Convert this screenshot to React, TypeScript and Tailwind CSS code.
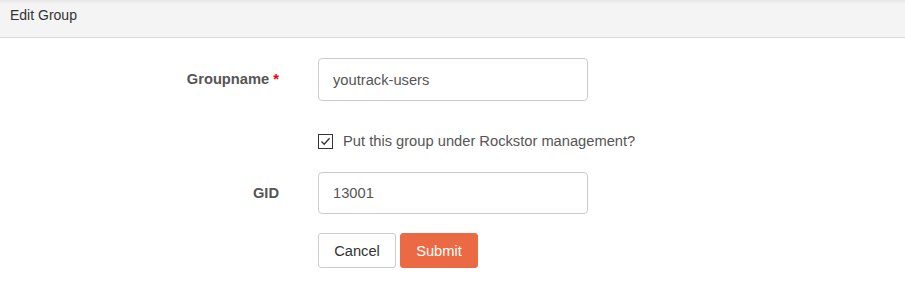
import { useState } from "react"

export default function App() {
  const [groupname, setGroupname] = useState("youtrack-users")
  const [gid, setGid] = useState("13001")
  const [managed, setManaged] = useState(true)

  return (
    <div className="min-h-[287px] bg-white text-[14px] text-[#555]" style={{ fontFamily: "'Liberation Sans', Arial, sans-serif" }}>
      <div className="h-[38px] border-b border-[#dcdcdc] bg-[#f4f4f4] bg-gradient-to-b from-[#e6e6e6] via-[#f4f4f4] via-[10%] to-[#f4f4f4] px-[10px] pt-[5px]">
        <span className="text-[14px] text-[#333]">Edit Group</span>
      </div>

      <form className="pt-[20px]" onSubmit={(e) => e.preventDefault()}>
        <div className="flex items-center">
          <label className="w-[280px] shrink-0 pr-[1px] text-right text-[14.7px] font-bold text-[#555]">
            Groupname <span className="text-[#e00]">*</span>
          </label>
          <input
            value={groupname}
            onChange={(e) => setGroupname(e.target.value)}
            className="ml-[38px] h-[43px] w-[270px] rounded-[4px] border border-[#ccc] px-[14px] text-[14.7px] text-[#555] outline-none"
          />
        </div>

        <div className="ml-[318px] mt-[29px] flex items-center">
          <button
            type="button"
            onClick={() => setManaged(!managed)}
            className="flex h-[15px] w-[15px] items-center justify-center border border-[#333] bg-white"
          >
            {managed && (
              <svg width="11" height="11" viewBox="0 0 11 11" fill="none">
                <path d="M1.5 5.5 L4.2 8.3 L9.5 2.2" stroke="#333" strokeWidth="1.3" />
              </svg>
            )}
          </button>
          <span className="ml-[10px] text-[14.7px] text-[#555]">Put this group under Rockstor management?</span>
        </div>

        <div className="mt-[20px] flex items-center">
          <label className="w-[280px] shrink-0 pr-[1px] text-right text-[14.7px] font-bold text-[#555]">GID</label>
          <input
            value={gid}
            onChange={(e) => setGid(e.target.value)}
            className="ml-[38px] h-[42px] w-[270px] rounded-[4px] border border-[#ccc] px-[14px] text-[14.7px] text-[#555] outline-none"
          />
        </div>

        <div className="ml-[318px] mt-[19px] flex gap-[4px]">
          <button type="button" className="h-[35px] w-[78px] rounded-[3px] border border-[#ccc] bg-white text-[14.7px] text-[#333]">
            Cancel
          </button>
          <button type="submit" className="h-[35px] w-[78px] rounded-[3px] border border-[#ec6a43] bg-[#ec6a43] text-[14.7px] text-white">
            Submit
          </button>
        </div>
      </form>
    </div>
  )
}
